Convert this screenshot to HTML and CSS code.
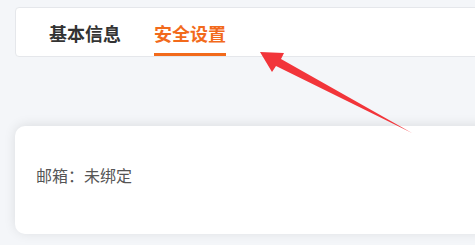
FILE: index.html
```html
<!DOCTYPE html>
<html lang="zh">
<head>
<meta charset="utf-8">
<link rel="stylesheet" href="styles.css">
</head>
<body>
<div class="page">
  <div class="tabs-card">
    <div class="tab">基本信息</div>
    <div class="tab active">安全设置</div>
  </div>
  <div class="info-card">
    <div class="info-row">邮箱：未绑定</div>
  </div>
</div>
<svg class="annot" width="475" height="245" viewBox="0 0 475 245">
  <polygon points="260,52 284,53 281,59 412,133 276,66 272,72" fill="#f2353a"/>
</svg>
</body>
</html>
```
FILE: styles.css
```css
html, body {
  margin: 0;
  padding: 0;
  width: 475px;
  height: 245px;
  overflow: hidden;
  background: #f4f6f9;
  font-family: "Noto Sans CJK SC", "Noto Sans", sans-serif;
}
.page {
  width: 540px;
  padding: 7px 0 0 15px;
}
.tabs-card {
  box-sizing: border-box;
  height: 50px;
  background: #fff;
  border: 1px solid #e5e7eb;
  border-radius: 4px;
  display: flex;
  gap: 33px;
  padding-left: 33px;
}
.tab {
  box-sizing: border-box;
  display: flex;
  align-items: center;
  padding-top: 5px;
  border-bottom: 3px solid transparent;
  font-size: 18px;
  font-weight: 700;
  color: #333;
}
.tab.active {
  color: #f26a1b;
  border-bottom-color: #f26a1b;
}
.info-card {
  box-sizing: border-box;
  margin-top: 69px;
  height: 108px;
  background: #fff;
  border-radius: 10px;
  box-shadow: 0 -1px 12px rgba(0, 0, 0, 0.1);
  padding: 37px 21px 0;
}
.info-row {
  font-size: 16px;
  line-height: 24px;
  color: #555;
}
.annot {
  position: absolute;
  top: 0;
  left: 0;
  pointer-events: none;
}
```
